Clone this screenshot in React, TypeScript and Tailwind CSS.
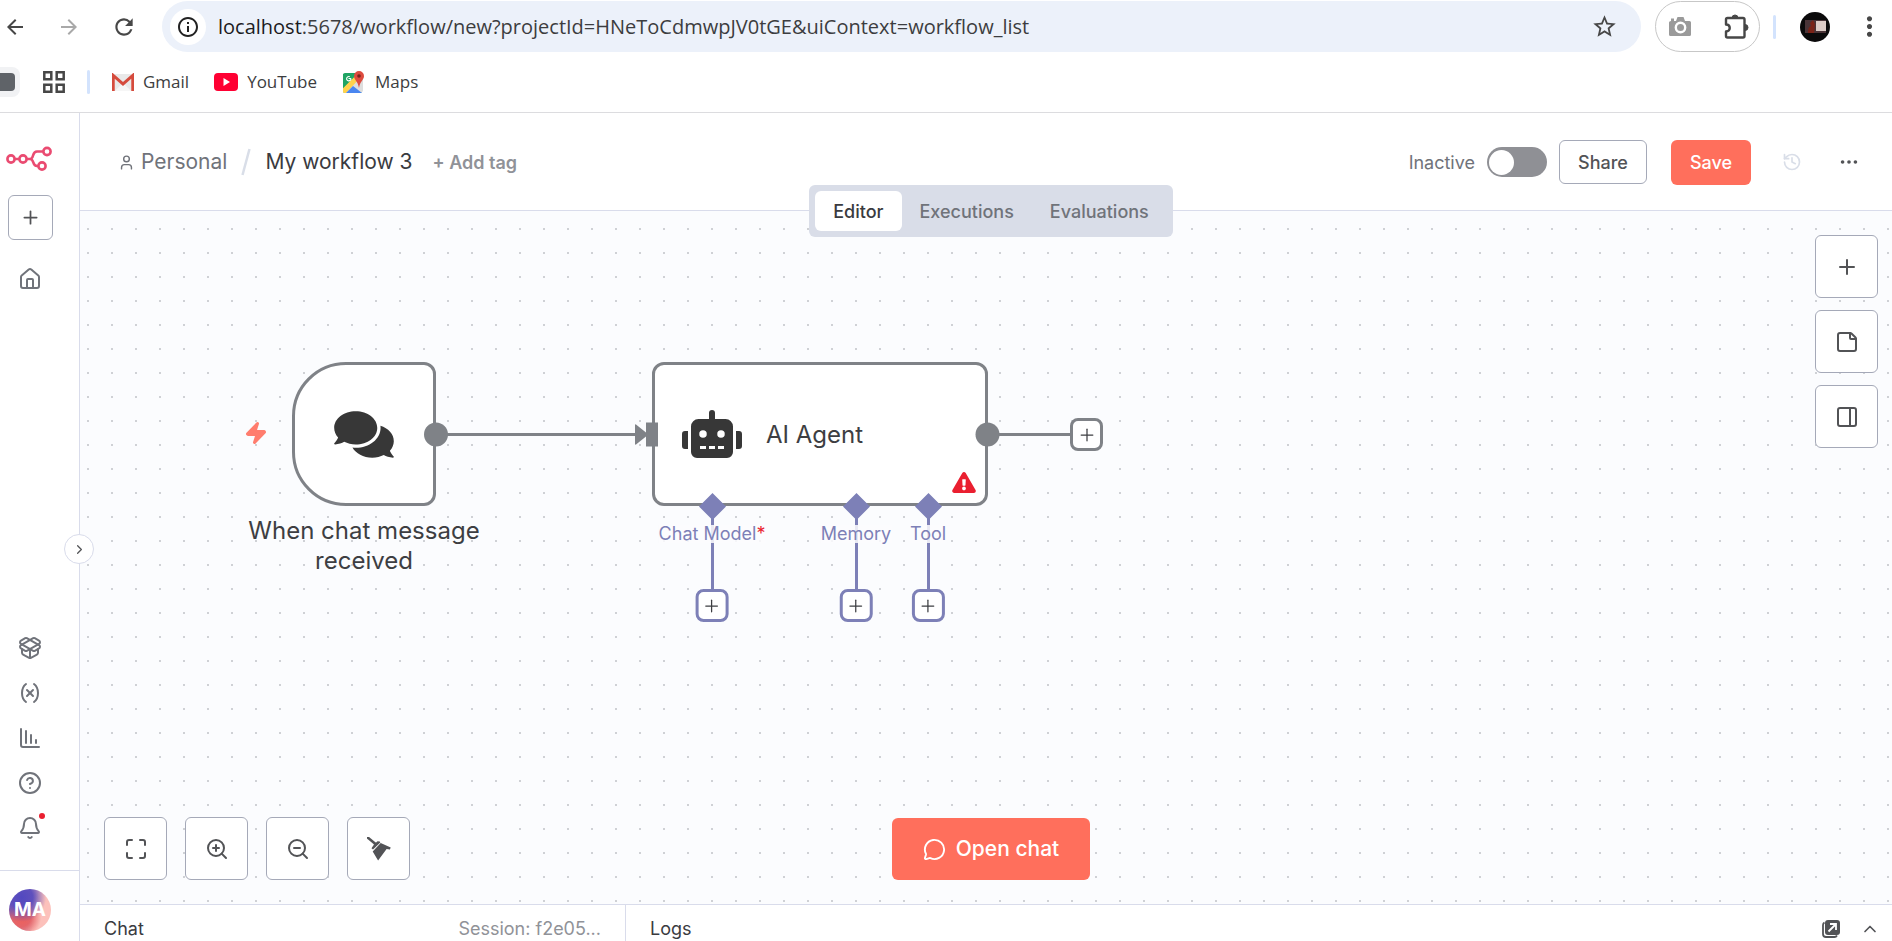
import React from 'react';
import { Bell, ChartColumnDecreasing, ChevronRight, ChevronUp, CircleHelp, Ellipsis, History, House, Maximize, MessageCircle, PackageOpen, PanelRight, Plus, StickyNote, User, Variable, Zap, ZoomIn, ZoomOut } from 'lucide-react';
import { FaComments, FaExclamationTriangle, FaRobot } from 'react-icons/fa';
import { MdArrowBack, MdArrowForward, MdInfoOutline, MdRefresh, MdStarBorder, MdMoreVert } from 'react-icons/md';

function GmailLogo() {
  return (
    <svg viewBox="0 0 24 18" className="h-[18px] w-[22px]" preserveAspectRatio="none" aria-hidden="true">
      <path d="M3 1h18v17H3z" fill="#e9e9e9" />
      <path d="M3 18 12 10l9 8z" fill="#f6f6f6" />
      <path d="M1.500 18V2.500L12 11l10.500-8.500V18" fill="none" stroke="#d54b3d" strokeWidth="3" />
    </svg>
  );
}

function YouTubeLogo() {
  return (
    <svg viewBox="0 0 24 18" className="h-[18px] w-6" aria-hidden="true">
      <rect width="24" height="18" rx="4" fill="#ff0033" />
      <path d="m9.500 5 6.500 4-6.500 4z" fill="#fff" />
    </svg>
  );
}

function MapsLogo() {
  return (
    <svg viewBox="0 0 24 24" className="size-6" aria-hidden="true">
      <rect x="1" y="3" width="19" height="20" rx="2" fill="#1fa463" />
      <path d="M2 22 18 6l3 3v12l-2 2H3z" fill="#dedede" />
      <path d="M1 18 15 4l4 3L4 23H2l-1-1z" fill="#ffd24c" />
      <path d="M1 4h14L1 18z" fill="#1fa463" />
      <path d="m4 23 7-7 9 7z" fill="#4a86f0" />
      <path d="M9 8.500H6.500M9 8.500A2.200 2.200 0 1 1 7.800 6.700" fill="none" stroke="#fff" strokeWidth="1.100" />
      <path d="M17 1a5 5 0 0 1 5 5c0 4-4 5-5 12-1-7-5-8-5-12a5 5 0 0 1 5-5z" fill="#dd4b3e" />
      <circle cx="17" cy="6" r="1.800" fill="#7a231d" />
    </svg>
  );
}

function CameraIcon() {
  return (
    <svg viewBox="0 0 24 22" className="h-[22px] w-6" aria-hidden="true">
      <path d="M3 2.500h3V5h2l1.500-4h6L17 5h4.500A1.500 1.500 0 0 1 23 6.500v12a1.500 1.500 0 0 1-1.500 1.500h-19A1.500 1.500 0 0 1 1 18.500v-12Q1 5 3 5z" fill="#9a9a9a" />
      <circle cx="12.500" cy="11.500" r="4.700" fill="none" stroke="#fff" strokeWidth="2.400" />
    </svg>
  );
}

function ExtensionIcon() {
  return (
    <svg viewBox="0 0 26 26" className="size-[26px]" aria-hidden="true">
      <path d="M3 5.500q0-1.500 1.500-1.500H20q1.500 0 1.500 1.500V22q0 1.500-1.500 1.500H4.500Q3 23.500 3 22v-4.500c5 0 5-7 0-7z" fill="none" stroke="#474747" strokeWidth="2.400" strokeLinejoin="round" />
      <path d="M9 4a3 3 0 0 1 6 0zM22 10.500a3 3 0 0 1 0 6z" fill="#474747" stroke="#474747" />
    </svg>
  );
}

function N8nLogo() {
  return (
    <svg viewBox="1 0 46 24" className="h-6 w-[46px] overflow-visible" fill="none" stroke="#ea4b71" strokeWidth="2.600" aria-label="n8n">
      <circle cx="5" cy="12" r="3.600" />
      <circle cx="17" cy="12" r="3.600" />
      <circle cx="41" cy="4.500" r="3.600" />
      <circle cx="36" cy="19" r="3.600" />
      <path d="M8.600 12h4.800M20.600 12H24c4.500 0 1.500-7.500 7-7.500h6.400M24 12c4.500 0 2 7 7 7h1.400" />
    </svg>
  );
}

function Broom() {
  return (
    <svg viewBox="0 0 24 24" className="size-6" fill="#525356" aria-hidden="true">
      <path d="M1 .8 8.500 7" stroke="#525356" strokeWidth="2.600" strokeLinecap="round" />
      <path d="M4.500 11.200 7 7.500l3.500-3.200 2.300.2.500 1-7.300 7z" />
      <path d="m13.700 6 10 4.600-.8 1.900-3.300-.5-8.500 11.500-5.400-9z" />
    </svg>
  );
}

function PopOut() {
  return (
    <svg viewBox="0 0 20 20" className="size-5" aria-hidden="true">
      <path d="M3.500 3.500A3 3 0 0 0 2 6v9a3 3 0 0 0 3 3h8.500a3 3 0 0 0 2.500-1.500" fill="none" stroke="#525356" strokeWidth="1.800" />
      <rect x="4" y="1" width="15" height="15" rx="3" fill="#525356" />
      <path d="m7.500 12.500 7-7M9 5h6v6" fill="none" stroke="#fff" strokeWidth="1.800" />
    </svg>
  );
}

function BrowserChrome() {
  return (
    <header className="flex h-[113px] shrink-0 flex-col border-b border-[#dcdcdf] bg-white font-['Open_Sans','Noto_Sans',sans-serif] text-[#3c3d40]">
      <div className="flex h-[52px] items-center pt-px">
        <nav className="flex w-[162px] items-center gap-[30px] pl-[3px]">
          <button aria-label="Back"><MdArrowBack className="size-6 text-[#474747]" /></button>
          <button aria-label="Forward"><MdArrowForward className="size-6 text-[#a9a9a9]" /></button>
          <button aria-label="Reload"><MdRefresh className="size-[26px] text-[#474747]" /></button>
        </nav>
        <div className="flex h-[51px] flex-1 items-center rounded-full bg-[#ecf1fa] pr-[23px] pl-2">
          <button aria-label="Site information" className="mr-3 flex size-9 items-center justify-center rounded-full bg-white">
            <MdInfoOutline className="size-6 text-[#222]" />
          </button>
          <div className="flex-1 text-[20px]">
            <span className="text-[#1c1c1e]">localhost</span>:5678/workflow/new?projectId=HNeToCdmwpJV0tGE&amp;uiContext=workflow_list
          </div>
          <button aria-label="Bookmark this tab"><MdStarBorder className="size-[27px] text-[#474747]" /></button>
        </div>
        <div className="ml-3.5 flex h-[51px] w-[105px] items-center justify-between rounded-full border border-[#c7c7c7] pr-2.5 pl-3">
          <button aria-label="Capture"><CameraIcon /></button>
          <button aria-label="Extensions"><ExtensionIcon /></button>
        </div>
        <span className="ml-[13px] h-6 w-[3px] rounded bg-[#d3e3fd]" />
        <button aria-label="Profile" className="ml-6">
          <svg viewBox="0 0 30 30" className="size-[30px]" aria-hidden="true">
            <circle cx="15" cy="15" r="15" fill="#0b0a0b" />
            <path d="M5 8h21v13H5z" fill="#4a3438" />
            <path d="M16 9h10v10H16z" fill="#dccbc6" />
            <path d="M8 21c0-5 1-6 3-7l-1-3 3-3 2 4-1 9z" fill="#7a2318" />
          </svg>
        </button>
        <button aria-label="Browser menu" className="mr-[7px] ml-6"><MdMoreVert className="size-[31px] text-[#474747]" /></button>
      </div>
      <div className="flex h-[60px] items-center text-[17px]">
        <button aria-label="Tab group" className="flex h-[30px] w-5 items-center rounded-r-lg bg-[#f1f2f4]">
          <span className="h-[18px] w-[15px] rounded-r-sm bg-[#5f6368]" />
        </button>
        <button aria-label="Apps" className="ml-[22px]">
          <svg viewBox="0 0 24 24" className="size-6" fill="none" stroke="#474747" strokeWidth="2.500" aria-hidden="true">
            <path d="M2.300 2.300h7v7h-7zM14.700 2.300h7v7h-7zM2.300 14.700h7v7h-7zM14.700 14.700h7v7h-7z" />
          </svg>
        </button>
        <span className="ml-[21px] h-6 w-[3px] rounded bg-[#d3e3fd]" />
        <a href="#gmail" className="ml-[22px] flex items-center gap-[9px]"><GmailLogo />Gmail</a>
        <a href="#youtube" className="ml-[25px] flex items-center gap-[9px]"><YouTubeLogo />YouTube</a>
        <a href="#maps" className="ml-[25px] flex items-center gap-[9px]"><MapsLogo />Maps</a>
      </div>
    </header>
  );
}

function SideBar() {
  return (
    <aside className="relative flex w-20 shrink-0 flex-col border-r border-[#d9dceb] bg-white text-[#70737a]">
      <div className="flex w-[60px] flex-1 flex-col items-center pt-[34px]">
        <N8nLogo />
        <button aria-label="Add" className="mt-6 flex size-[45px] items-center justify-center rounded-md border border-[#a5a9b8] text-[#525356]">
          <Plus size={21} />
        </button>
        <a href="#home" aria-label="Home" className="mt-[27px]"><House size={24} /></a>
        <div className="mt-auto mb-[30px] flex flex-col gap-[21px]">
          <a href="#templates" aria-label="Templates"><PackageOpen size={24} /></a>
          <a href="#variables" aria-label="Variables"><Variable size={24} /></a>
          <a href="#insights" aria-label="Insights"><ChartColumnDecreasing size={24} /></a>
          <a href="#help" aria-label="Help"><CircleHelp size={24} /></a>
          <a href="#whatsnew" aria-label="What's new" className="relative">
            <Bell size={24} />
            <span className="absolute -top-[3px] -right-[3px] size-1.5 rounded-full bg-[#ea1f30]" />
          </a>
        </div>
      </div>
      <div className="flex h-[71px] items-start border-t border-[#d9dceb] pt-[18px] pl-[9px]">
        <button className="size-[42px] rounded-full bg-[radial-gradient(circle_at_30%_20%,#5248c0_0%,#5f50bd_25%,transparent_55%),radial-gradient(circle_at_30%_68%,#ef5f58_0%,#e56468_22%,transparent_48%),linear-gradient(100deg,#7a64b8_10%,#fcc1bb_62%)] text-[19px] font-bold text-white">MA</button>
      </div>
      <button aria-label="Expand sidebar" className="absolute top-[421px] -right-[15px] z-10 flex size-[30px] items-center justify-center rounded-full border border-[#d9dceb] bg-white">
        <ChevronRight size={15} className="text-[#525356]" />
      </button>
    </aside>
  );
}

function WorkflowHeader() {
  return (
    <div className="flex h-[98px] shrink-0 items-center border-b border-[#d9dceb] bg-white pt-px pr-8 pl-[38px]">
      <a href="#personal" className="flex items-center gap-1.5 text-[21px] text-[#70737a]"><User size={17} />Personal</a>
      <svg viewBox="0 0 10 28" className="mx-3.5 h-7 w-2.5" aria-hidden="true"><path d="M8.500 1 1.500 27" stroke="#d9dee8" strokeWidth="2.500" /></svg>
      <h1 className="text-[21px] text-[#3a3b3f]">My workflow 3</h1>
      <button className="ml-5 text-[18px] font-semibold text-[#909298]">+ Add tag</button>
      <label className="ml-auto flex items-center gap-3 text-[18px] text-[#70737a]">
        Inactive
        <input type="checkbox" role="switch" className="peer sr-only" />
        <span className="flex h-[30px] w-[60px] items-center rounded-full bg-[#8f9095] pl-0.5"><span className="size-[25px] rounded-full bg-white" /></span>
      </label>
      <button className="ml-3 h-11 w-22 rounded-md border border-[#a5a9b8] text-[18px] font-medium text-[#525356]">Share</button>
      <button className="ml-6 h-[45px] w-20 rounded-md bg-[#ff6f5c] text-[18px] font-medium text-white">Save</button>
      <button aria-label="Workflow history" className="ml-[31px] text-[#d9dee8]"><History size={20} /></button>
      <button aria-label="More" className="ml-9 text-[#525356]"><Ellipsis size={22} /></button>
    </div>
  );
}

const square = 'flex size-[63px] items-center justify-center rounded-md border border-[#a5a9b8] bg-white text-[#525356]';

const inputs = [
  { name: 'Chat Model', required: true, x: 'left-[632px]' },
  { name: 'Memory', required: false, x: 'left-[776px]' },
  { name: 'Tool', required: false, x: 'left-[848px]' },
];

function Nodes() {
  return (
    <div className="absolute inset-0 text-[#3d3e42]">
      <svg className="absolute top-0 left-0 h-[500px] w-[1100px]" aria-hidden="true">
        <path d="M356 223.500h200M908 223.500h84" stroke="#7f8287" strokeWidth="3" />
        <path d="M632.500 296v84M776.500 296v84M848.500 296v84" stroke="#7d80b7" strokeWidth="3" />
      </svg>

      <Zap size={24} className="absolute top-[210px] left-[164px] fill-[#ff7d6e] text-[#ff7d6e]" />
      <div className="absolute top-[151px] left-[212px] flex size-36 items-center justify-center rounded-l-[54px] rounded-r-xl border-3 border-[#7f8287] bg-white">
        <FaComments className="h-[53px] w-[60px] text-[#373737]" />
      </div>
      <p className="absolute top-[305px] left-[144px] w-[280px] text-center text-[24px]/[30px]">When chat message<br />received</p>

      <div className="absolute top-[151px] left-[572px] flex h-36 w-[336px] items-center gap-6 rounded-xl border-3 border-[#7f8287] bg-white pl-[27px]">
        <FaRobot className="h-12 w-[60px] text-[#373737]" />
        <span className="pt-0.5 text-[24px]">AI Agent</span>
      </div>
      <FaExclamationTriangle className="absolute top-[261px] left-[872px] h-[21px] w-6 text-[#ea1f30]" />

      <svg className="pointer-events-none absolute top-0 left-0 h-[500px] w-[1100px]" aria-hidden="true">
        <circle cx="356" cy="223.500" r="12" fill="#7f8287" />
        <circle cx="907.500" cy="223.500" r="12" fill="#7f8287" />
        <path d="M555 214v19q0 1 1 .5l10-8v10h12v-24h-12v10l-10-8q-1-.5-1 .5z" fill="#7f8287" />
        <path d="m632.500 282 13.500 13.500-13.500 13.500-13.500-13.500zM776.500 282l13.500 13.500-13.500 13.500-13.500-13.500zM848.500 282l13.500 13.500-13.500 13.500-13.500-13.500z" fill="#7d80b7" />
      </svg>
      <button aria-label="Add next node" className="absolute top-[207px] left-[990px] flex size-[33px] items-center justify-center rounded-lg border-3 border-[#7f8287] bg-white"><Plus size={20} strokeWidth={1.5} /></button>
      {inputs.map((i) => (
        <div key={i.name} className={`absolute top-[314px] flex -translate-x-1/2 flex-col items-center ${i.x}`}>
          <span className="bg-[#fbfcfe]/85 text-[18px]/[18px] whitespace-nowrap text-[#7d80b7]">{i.name}{i.required && <span className="text-[#ea1f30]">*</span>}</span>
          <button aria-label={`Add ${i.name}`} className="mt-[46px] flex size-[33px] items-center justify-center rounded-lg border-3 border-[#7d80b7] bg-white"><Plus size={20} strokeWidth={1.5} /></button>
        </div>
      ))}
    </div>
  );
}

function Canvas() {
  return (
    <section className="relative flex flex-1 flex-col justify-between bg-[#fbfcfe] bg-[radial-gradient(circle_at_8px_18px,#cfd1d5_0px,#cfd1d5_1px,transparent_1px)] bg-size-[24px_24px]">
      <Nodes />
      <div className="absolute inset-x-0 -top-[26px] flex justify-center pl-2.5">
        <div className="flex h-[52px] items-center rounded-md bg-[#d9dde8] px-1.5 text-[18px] font-medium text-[#70737a]" role="tablist">
          <button role="tab" aria-selected="true" className="h-10 rounded-md bg-white px-[18px] text-[#3a3b3f]">Editor</button>
          <button role="tab" aria-selected="false" className="h-10 px-[18px]">Executions</button>
          <button role="tab" aria-selected="false" className="h-10 px-[18px]">Evaluations</button>
        </div>
      </div>
      <div className="relative mt-6 mr-3.5 flex flex-col gap-3 self-end">
        <button aria-label="Add node" className={square}><Plus size={24} /></button>
        <button aria-label="Add sticky note" className={square}><StickyNote size={24} /></button>
        <button aria-label="Toggle panel" className={square}><PanelRight size={24} /></button>
      </div>
      <div className="relative mb-6 ml-6 flex gap-[18px]">
        <button aria-label="Fit view" className={square}><Maximize size={24} /></button>
        <button aria-label="Zoom in" className={square}><ZoomIn size={24} /></button>
        <button aria-label="Zoom out" className={square}><ZoomOut size={24} /></button>
        <button aria-label="Tidy up" className={square}><Broom /></button>
      </div>
      <div className="pointer-events-none absolute inset-x-0 bottom-6 flex justify-center pl-2.5">
        <button className="pointer-events-auto flex h-[62px] w-[198px] items-center justify-center gap-2.5 rounded-md bg-[#ff6f5c] text-[21px] font-medium text-white"><MessageCircle size={23} />Open chat</button>
      </div>
    </section>
  );
}

function BottomPanel() {
  return (
    <footer className="flex h-[37px] shrink-0 overflow-hidden border-t border-[#d9dceb] bg-white text-[18px]/[24px] text-[#3a3b3f]">
      <div className="flex w-[546px] justify-between border-r border-[#d9dceb] pt-3 pr-6 pl-6">
        <h2>Chat</h2>
        <span className="text-[#909298]">Session: f2e05...</span>
      </div>
      <div className="flex flex-1 items-start pt-3 pl-6">
        <h2>Logs</h2>
        <button aria-label="Pop out" className="mt-0.5 ml-auto"><PopOut /></button>
        <button aria-label="Open panel" className="mt-0.5 mr-3 ml-[19px]"><ChevronUp size={20} className="text-[#525356]" /></button>
      </div>
    </footer>
  );
}

export default function App() {
  return (
    <div className="flex h-screen flex-col overflow-hidden bg-white font-['Inter',sans-serif]">
      <BrowserChrome />
      <div className="flex min-h-0 flex-1">
        <SideBar />
        <main className="flex min-w-0 flex-1 flex-col">
          <WorkflowHeader />
          <Canvas />
          <BottomPanel />
        </main>
      </div>
    </div>
  );
}
